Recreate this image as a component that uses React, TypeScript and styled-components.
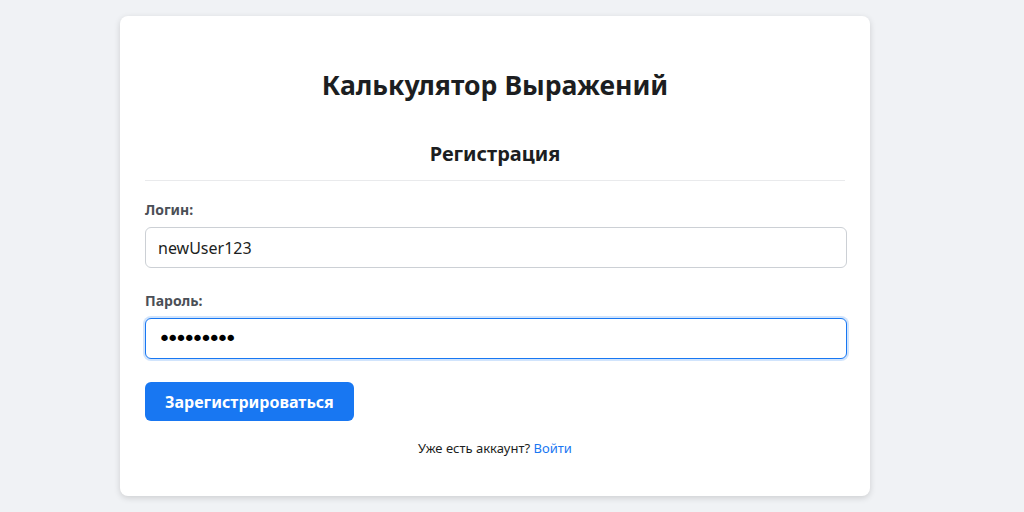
import styled, { createGlobalStyle } from "styled-components";

const GlobalStyle = createGlobalStyle`
    * {
        box-sizing: border-box;
    }
    body {
        margin: 0;
        background-color: #f0f2f5;
        font-family: "Noto Sans", "Open Sans", sans-serif;
        color: #1c1e21;
    }
`;

const Page = styled.div`
    padding: 16px 0 0 120px;
    min-height: 512px;
`;

const Card = styled.div`
    width: 750px;
    background-color: #ffffff;
    border-radius: 8px;
    box-shadow: 0 2px 6px rgba(0, 0, 0, 0.15);
    padding: 50px 25px 38px;
    display: flex;
    flex-direction: column;
`;

const Title = styled.h1`
    margin: 0;
    text-align: center;
    font-size: 26.6px;
    font-weight: 700;
    line-height: 38px;
    color: #1c1e21;
`;

const Subtitle = styled.h2`
    margin: 36px 0 0;
    padding-bottom: 12px;
    text-align: center;
    font-size: 20px;
    font-weight: 700;
    line-height: 28px;
    border-bottom: 1px solid #e9eaec;
`;

const Form = styled.form`
    display: flex;
    flex-direction: column;
    margin-top: 19px;
`;

const Field = styled.div`
    display: flex;
    flex-direction: column;
    gap: 7px;
    margin-bottom: 23px;
`;

const Label = styled.label`
    font-size: 14px;
    font-weight: 700;
    line-height: 20px;
    color: #4b4f56;
`;

const Input = styled.input`
    width: calc(100% + 2px);
    height: 41px;
    padding: 0 12px;
    font-family: inherit;
    font-size: 16px;
    color: #1c1e21;
    border-radius: 6px;
    border: 1px solid #ccd0d5;
    outline: none;
    background: #fff;

    &[type="password"] {
        font-family: "DejaVu Sans", sans-serif;
        font-size: 22px;
        letter-spacing: -4.7px;
        color: #000;
        caret-color: #000;
    }

    &:focus {
        border-color: #1877f2;
        box-shadow: 0 0 0 2px rgba(24, 119, 242, 0.2);
    }
`;

const SubmitButton = styled.button`
    align-self: flex-start;
    height: 39px;
    padding: 0 20px;
    border: none;
    border-radius: 6px;
    background-color: #1877f2;
    color: #fff;
    font-family: inherit;
    font-size: 16px;
    font-weight: 700;
    cursor: pointer;
`;

const Footer = styled.p`
    margin: 17px 0 0;
    text-align: center;
    font-size: 13px;
    line-height: 20px;
    color: #1c1e21;

    a {
        color: #1877f2;
        text-decoration: none;
    }
`;

export default function App() {
    return (
        <>
            <GlobalStyle />
            <Page>
                <Card>
                    <Title>Калькулятор Выражений</Title>
                    <Subtitle>Регистрация</Subtitle>
                    <Form onSubmit={e => e.preventDefault()}>
                        <Field>
                            <Label htmlFor="login">Логин:</Label>
                            <Input id="login" type="text" defaultValue="newUser123" />
                        </Field>
                        <Field>
                            <Label htmlFor="password">Пароль:</Label>
                            <Input id="password" type="password" defaultValue="secret123" autoFocus />
                        </Field>
                        <SubmitButton type="submit">Зарегистрироваться</SubmitButton>
                    </Form>
                    <Footer>
                        Уже есть аккаунт? <a href="#">Войти</a>
                    </Footer>
                </Card>
            </Page>
        </>
    );
}
